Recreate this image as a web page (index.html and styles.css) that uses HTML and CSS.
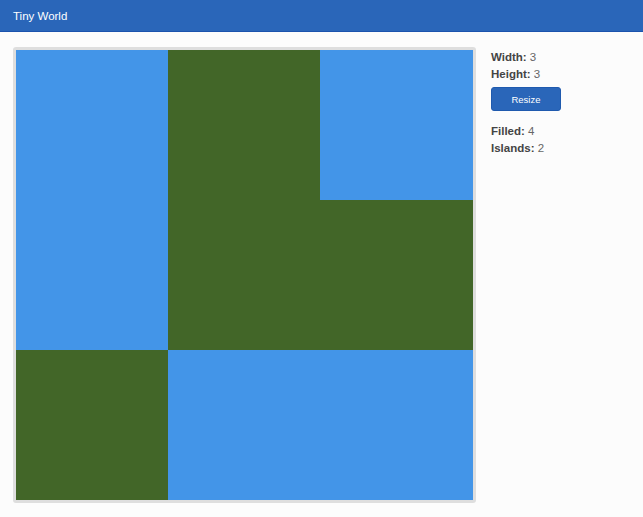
FILE: index.html
```html
<!DOCTYPE html>
<html>
<head>
<meta charset="utf-8">
<link rel="stylesheet" href="styles.css">
</head>
<body>
<header class="topbar">Tiny World</header>
<main class="layout">
  <div class="board">
    <div class="cell water"></div>
    <div class="cell land"></div>
    <div class="cell water"></div>
    <div class="cell water"></div>
    <div class="cell land"></div>
    <div class="cell land"></div>
    <div class="cell land"></div>
    <div class="cell water"></div>
    <div class="cell water"></div>
  </div>
  <aside class="panel">
    <div class="stat"><b>Width:</b> 3</div>
    <div class="stat"><b>Height:</b> 3</div>
    <button class="btn">Resize</button>
    <div class="stat"><b>Filled:</b> 4</div>
    <div class="stat"><b>Islands:</b> 2</div>
  </aside>
</main>
</body>
</html>
```

FILE: styles.css
```css
html, body {
  margin: 0;
  padding: 0;
  background: #fcfcfc;
  font-family: "Liberation Sans", Arial, sans-serif;
}
.topbar {
  height: 32px;
  box-sizing: border-box;
  background: #2a66b9;
  border-bottom: 1px solid #1b53ad;
  color: #fff;
  font-size: 11.5px;
  line-height: 32px;
  padding-left: 13px;
}
.layout {
  display: flex;
  align-items: flex-start;
  gap: 15px;
  padding: 15px 13px;
}
.board {
  display: grid;
  grid-template-columns: 152px 152px 153px;
  grid-template-rows: 150px 150px 150px;
  border: 3px solid #dedede;
  border-radius: 3px;
}
.cell.water { background: #4395e8; }
.cell.land { background: #426628; }
.panel {
  display: flex;
  flex-direction: column;
  align-items: flex-start;
  font-size: 11.5px;
  color: #666;
  line-height: 17px;
  padding-top: 2px;
}
.stat b { color: #444; }
.btn {
  margin: 4px 0 12px;
  width: 70px;
  height: 24px;
  background: #2a66b9;
  border: 1px solid #1f5aae;
  border-radius: 3px;
  color: #fff;
  font-family: "Liberation Sans", Arial, sans-serif;
  font-size: 9.5px;
  padding: 0;
}
```
